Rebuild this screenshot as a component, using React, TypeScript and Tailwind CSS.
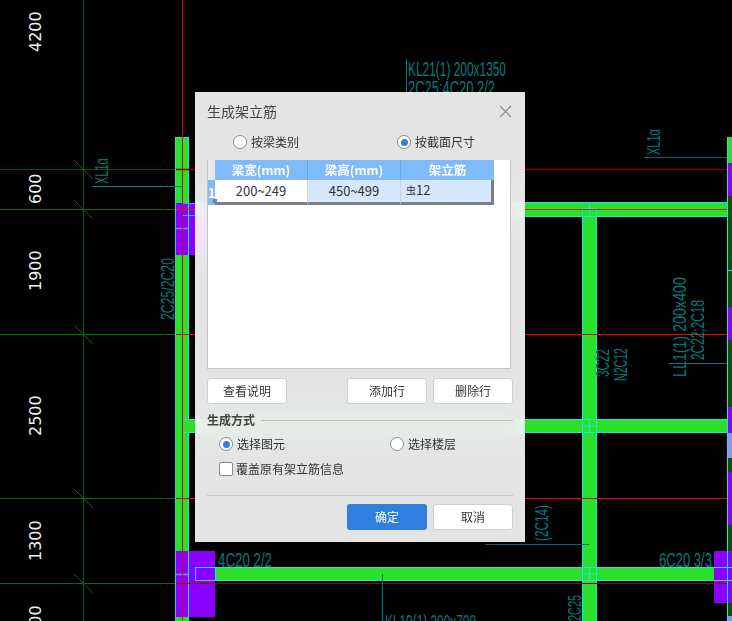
const TEAL = '#007c7c';
const CYAN = '#19e6e0';
const GREEN = '#2be02b';
const PURPLE = '#8a00ff';

function T({ x, y, len, size = 19, r, children, color = TEAL }: { x: number; y: number; len: number; size?: number; r?: boolean; children: string; color?: string }) {
  return (
    <text
      x={x}
      y={y}
      fontSize={size}
      fill={color}
      fontFamily="'Liberation Sans', sans-serif"
      textLength={len}
      lengthAdjust="spacingAndGlyphs"
      transform={r ? `rotate(-90 ${x} ${y})` : undefined}
    >
      {children}
    </text>
  );
}

function Dim({ x, y, children }: { x: number; y: number; children: string }) {
  return (
    <text x={x} y={y} fontSize={16} fill="#f2f2f2" fontFamily="'DejaVu Sans', sans-serif" transform={`rotate(-90 ${x} ${y})`}>
      {children}
    </text>
  );
}

function Beam({ x, y, w, h }: { x: number; y: number; w: number; h: number }) {
  return <rect x={x + 0.5} y={y + 0.5} width={w} height={h} fill={GREEN} stroke={CYAN} strokeWidth={1} />;
}

function Canvas() {
  const rows = [169.5, 209.5, 334.5, 498.5, 583.5];
  const rightCol: [number, number, string][] = [
    [137, 26, GREEN],
    [163, 33, PURPLE],
    [196, 111, '#0a520a'],
    [307, 33, PURPLE],
    [340, 67, '#0a520a'],
    [407, 26, PURPLE],
    [433, 25, '#8f8fff'],
    [458, 14, '#0a520a'],
    [472, 53, PURPLE],
    [525, 26, '#0a520a'],
    [551, 52, PURPLE],
    [603, 13, '#0a520a'],
    [616, 5, '#8f8fff'],
  ];
  return (
    <svg className="absolute inset-0" width={732} height={621} viewBox="0 0 732 621">
      <rect width={732} height={621} fill="#000" />
      {/* axis grid */}
      <line x1={83.5} y1={0} x2={83.5} y2={621} stroke="#0a5a00" />
      {rows.map((y, i) => (
        <g key={y}>
          <line x1={0} y1={y} x2={176} y2={y} stroke={i === 0 ? '#0b5200' : '#0a6e00'} />
          <line x1={74} y1={y - 9.5} x2={93} y2={y + 9.5} stroke="#0a6400" />
        </g>
      ))}
      <Dim x={41} y={52}>4200</Dim>
      <Dim x={41} y={204}>600</Dim>
      <Dim x={41} y={291}>1900</Dim>
      <Dim x={41} y={436}>2500</Dim>
      <Dim x={41} y={561}>1300</Dim>
      <Dim x={41} y={646}>1800</Dim>

      {/* left column */}
      <Beam x={175} y={137} w={13} h={484} />
      <rect x={176} y={203} width={40} height={52} fill={PURPLE} />
      <rect x={176} y={551} width={39} height={66} fill={PURPLE} />
      <rect x={182.5} y={203.5} width={30} height={12} fill="none" stroke="#19b8f0" />
      <line x1={176} y1={228.5} x2={188} y2={228.5} stroke="#5a9cff" strokeWidth={1.5} />
      <line x1={176} y1={574.5} x2={188} y2={574.5} stroke="#5a9cff" strokeWidth={1.5} />
      <line x1={175.5} y1={203} x2={175.5} y2={621} stroke="#19d0f0" />
      <line x1={188.5} y1={137} x2={188.5} y2={621} stroke={CYAN} />

      {/* horizontal beams */}
      <Beam x={196} y={202} w={531} h={14} />
      <Beam x={182} y={419} w={545} h={13} />
      <Beam x={215} y={567} w={499} h={13} />
      <rect x={195.5} y={567.5} width={20} height={13} fill="none" stroke={CYAN} />

      {/* vertical beam */}
      <rect x={583} y={216} width={13} height={405} fill={GREEN} />
      <line x1={582.5} y1={208} x2={582.5} y2={621} stroke={CYAN} />
      <line x1={596.5} y1={208} x2={596.5} y2={621} stroke={CYAN} />
      <rect x={582.5} y={208.5} width={14} height={8} fill={GREEN} stroke={CYAN} />
      <line x1={589.5} y1={203} x2={589.5} y2={216} stroke={CYAN} />
      {[419, 567].map((y) => (
        <g key={y}>
          <rect x={582.5} y={y + 0.5} width={14} height={13} fill={GREEN} stroke={CYAN} />
          <line x1={582.5} y1={y + 7} x2={596.5} y2={y + 7} stroke={CYAN} />
          <line x1={589.5} y1={y} x2={589.5} y2={y + 14} stroke={CYAN} />
        </g>
      ))}

      {/* right column */}
      {rightCol.map(([y, h, c]) => (
        <rect key={y} x={728} y={y} width={4} height={h} fill={c} />
      ))}
      <rect x={714} y={551} width={18} height={52} fill={PURPLE} />
      <line x1={727.5} y1={137} x2={727.5} y2={621} stroke={CYAN} />
      <line x1={714} y1={567.5} x2={732} y2={567.5} stroke={CYAN} />
      <line x1={714} y1={580.5} x2={732} y2={580.5} stroke={CYAN} />
      <line x1={728} y1={270.5} x2={732} y2={270.5} stroke={CYAN} />

      {/* red lines */}
      <line x1={182.5} y1={0} x2={182.5} y2={621} stroke="#e00000" />
      <line x1={176} y1={169.5} x2={727} y2={169.5} stroke="#860000" strokeWidth={1.5} />
      <line x1={176} y1={209.5} x2={727} y2={209.5} stroke="#c03010" />
      <line x1={176} y1={334.5} x2={727} y2={334.5} stroke="#f00000" />
      <line x1={176} y1={498.5} x2={727} y2={498.5} stroke="#f00000" />
      <line x1={176} y1={583.5} x2={727} y2={583.5} stroke="#a80000" />

      {/* teal annotations */}
      <line x1={406.5} y1={59} x2={406.5} y2={92} stroke={TEAL} />
      <T x={408} y={76} len={98} size={20}>KL21(1) 200x1350</T>
      <T x={408} y={95} len={87} size={20}>2C25:4C20 2/2</T>
      <T x={108} y={184} len={26} r>XL1α</T>
      <line x1={92} y1={186.5} x2={182} y2={186.5} stroke={TEAL} />
      <T x={174} y={320} len={62} r>2C25/2C20</T>
      <T x={660} y={155} len={26} r>XL1α</T>
      <line x1={644} y1={157.5} x2={727} y2={157.5} stroke="#006a6a" />
      <T x={686} y={377} len={100} r>LL1(1) 200x400</T>
      <T x={704} y={360} len={60} r>2C22;2C18</T>
      <line x1={669} y1={363.5} x2={727} y2={363.5} stroke={TEAL} />
      <T x={609} y={377} len={28} r>3C22</T>
      <T x={627} y={381} len={33} r>N2C12</T>
      <T x={548} y={541} len={36} r>(2C14)</T>
      <line x1={485} y1={544.5} x2={589} y2={544.5} stroke="#006a6a" />
      <T x={659} y={567} len={53} size={20}>6C20 3/3</T>
      <T x={218} y={567} len={54} size={20}>4C20 2/2</T>
      <line x1={382.5} y1={574} x2={382.5} y2={621} stroke={TEAL} />
      <T x={385} y={629} len={91} size={20}>KL19(1) 200x700</T>
      <T x={581} y={621} len={26} r>2C25</T>
    </svg>
  );
}

function Radio({ on, label }: { on?: boolean; label: string }) {
  return (
    <div className="flex items-center gap-[4px]">
      <span className="flex h-[14px] w-[14px] items-center justify-center rounded-full border border-[#8a8a8a] bg-white">
        {on && <span className="h-[7px] w-[7px] rounded-full bg-[#2e7fe0]" />}
      </span>
      <span>{label}</span>
    </div>
  );
}

function Btn({ label, primary }: { label: string; primary?: boolean }) {
  return (
    <button
      className={
        primary
          ? 'h-[26px] w-[80px] rounded-[3px] bg-[#2e7fe0] text-white'
          : 'h-[26px] w-[80px] rounded-[3px] border border-[#d0d0d0] bg-white text-[#333]'
      }
    >
      {label}
    </button>
  );
}

function Dialog() {
  return (
    <div
      className="absolute left-[195px] top-[92px] flex h-[450px] w-[330px] flex-col bg-[#fdfdfd]/90 text-[12px] text-[#333] backdrop-blur-[14px]"
      style={{ fontFamily: "'Noto Sans CJK SC', sans-serif" }}
    >
      <div className="flex h-[40px] items-center justify-between pb-[2px] pl-[12px] pr-[13px]">
        <span className="text-[14px] text-[#444]">生成架立筋</span>
        <svg width="13" height="13" viewBox="0 0 13 13" stroke="#8a8a8a" strokeWidth="1.1" fill="none">
          <path d="M1 1 L12 12 M12 1 L1 12" />
        </svg>
      </div>
      <div className="flex h-[20px] items-center pl-[38px]">
        <div className="w-[164px]"><Radio label="按梁类别" /></div>
        <Radio on label="按截面尺寸" />
      </div>
      <div className="ml-[12px] mt-[8px] h-[209px] w-[304px] border-x border-b border-[#c4c4c4] bg-white">
        <div className="grid h-[20px] grid-cols-[7px_93px_93px_93px] text-[12.5px] font-bold text-white">
          <div className="bg-[#e8e8e8]" />
          <div className="flex items-center justify-center border-r border-[#68a4e8] bg-[#7fbafa]">梁宽(mm)</div>
          <div className="flex items-center justify-center border-r border-[#68a4e8] bg-[#7fbafa]">梁高(mm)</div>
          <div className="flex items-center justify-center bg-[#7fbafa]">架立筋</div>
        </div>
        <div className="relative grid h-[22px] grid-cols-[7px_93px_93px_93px] text-[13px] text-[#333]">
          <div className="flex items-center justify-center overflow-hidden bg-[#7fbafa] font-bold text-white">1</div>
          <div className="flex items-center justify-center border-b-[3px] border-r border-[#808080] border-r-[#d4d4d4] bg-white">200~249</div>
          <div className="flex items-center justify-center border-b-[3px] border-r border-[#808080] border-r-[#d4d4d4] bg-[#d4e7fc]">450~499</div>
          <div className="flex items-center border-b-[3px] border-r-[3px] border-[#808080] bg-[#d4e7fc] pb-[2px] pl-[5px]">
            <span className="text-[10px]">虫</span>12
          </div>
          <span className="absolute left-[5px] top-[19px] h-[4px] w-[4px] bg-[#808080]" />
        </div>
      </div>
      <div className="ml-[12px] mt-[9px] flex w-[306px] gap-[6px]">
        <Btn label="查看说明" />
        <div className="flex-1" />
        <Btn label="添加行" />
        <Btn label="删除行" />
      </div>
      <div className="ml-[12px] mt-[6px] flex h-[20px] w-[306px] items-center gap-[6px]">
        <span className="font-bold text-[#444]">生成方式</span>
        <div className="h-px flex-1 bg-[#bdbdbd]" />
      </div>
      <div className="mt-[4px] flex h-[20px] items-center pl-[24px]">
        <div className="w-[171px]"><Radio on label="选择图元" /></div>
        <Radio label="选择楼层" />
      </div>
      <div className="ml-[24px] mt-[7px] flex h-[16px] items-center gap-[3px]">
        <span className="h-[14px] w-[14px] rounded-[2px] border border-[#8a8a8a] bg-white" />
        <span>覆盖原有架立筋信息</span>
      </div>
      <div className="ml-[12px] mt-[18px] h-px w-[306px] bg-[#c4c4c4]" />
      <div className="mt-[8px] flex justify-end gap-[6px] pr-[12px]">
        <Btn primary label="确定" />
        <Btn label="取消" />
      </div>
    </div>
  );
}

export default function App() {
  return (
    <div className="relative h-[621px] w-[732px] overflow-hidden bg-black">
      <Canvas />
      <Dialog />
    </div>
  );
}
